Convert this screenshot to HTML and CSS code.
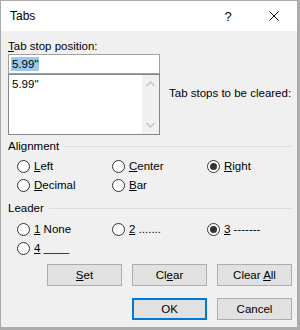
FILE: index.html
```html
<!DOCTYPE html>
<html lang="en">
<head>
  <meta charset="UTF-8">
  <title>Tabs</title>
  <link rel="stylesheet" href="styles.css">
</head>
<body>
  <div class="dialog">
    <div class="titlebar">
      <span class="title">Tabs</span>
      <span class="cap-btn">?</span>
      <span class="cap-btn">
        <svg width="10" height="10" viewBox="0 0 10 10"><path d="M0.5 0.5 L9.5 9.5 M9.5 0.5 L0.5 9.5" stroke="#000" stroke-width="1" fill="none"/></svg>
      </span>
    </div>

    <div class="content">
      <div class="label"><u>T</u>ab stop position:</div>
      <div class="stops">
        <div class="stop-col">
          <div class="input"><span class="sel">5.99"</span></div>
          <div class="listbox">
            <div class="items">
              <div>5.99"</div>
            </div>
            <div class="scroll">
              <svg width="9" height="6" viewBox="0 0 9 6"><path d="M0.5 5 L4.5 1 L8.5 5" stroke="#c4c4c4" stroke-width="1.4" fill="none"/></svg>
              <svg width="9" height="6" viewBox="0 0 9 6"><path d="M0.5 1 L4.5 5 L8.5 1" stroke="#c4c4c4" stroke-width="1.4" fill="none"/></svg>
            </div>
          </div>
        </div>
        <div class="cleared">Tab stops to be cleared:</div>
      </div>

      <div class="group-head align-head"><span>Alignment</span><span class="rule"></span></div>
      <div class="options">
        <div class="opt"><span class="radio"></span><span><u>L</u>eft</span></div>
        <div class="opt"><span class="radio"></span><span><u>C</u>enter</span></div>
        <div class="opt"><span class="radio on"></span><span><u>R</u>ight</span></div>
        <div class="opt"><span class="radio"></span><span><u>D</u>ecimal</span></div>
        <div class="opt"><span class="radio"></span><span><u>B</u>ar</span></div>
      </div>

      <div class="group-head leader-head"><span>Leader</span><span class="rule"></span></div>
      <div class="options">
        <div class="opt"><span class="radio"></span><span><u>1</u> None</span></div>
        <div class="opt"><span class="radio"></span><span><u>2</u> .......</span></div>
        <div class="opt"><span class="radio on"></span><span><u>3</u> -------</span></div>
        <div class="opt"><span class="radio"></span><span><u>4</u> ____</span></div>
      </div>

      <div class="buttons">
        <button class="btn"><u>S</u>et</button>
        <button class="btn">Cl<u>e</u>ar</button>
        <button class="btn">Clear <u>A</u>ll</button>
      </div>
      <div class="buttons second">
        <button class="btn default">OK</button>
        <button class="btn">Cancel</button>
      </div>
    </div>
  </div>
</body>
</html>
```

FILE: styles.css
```css
html, body {
  margin: 0;
  padding: 0;
}

body {
  font-family: 'Liberation Sans', Arial, sans-serif;
  font-size: 11.5px;
  line-height: 15px;
  color: #000;
  background: #fff;
}

.dialog {
  width: 300px;
  height: 330px;
  box-sizing: border-box;
  border-left: 1px solid #aaaaaa;
  border-top: 1px solid #aaaaaa;
  border-right: 3px solid #acacac;
  border-bottom: 3px solid #acacac;
  background: #f0f0f0;
  display: flex;
  flex-direction: column;
}

.titlebar {
  height: 30px;
  background: #fff;
  display: flex;
  align-items: center;
  padding-left: 9px;
}

.title {
  flex: 1;
  font-size: 12px;
}

.cap-btn {
  width: 46px;
  height: 30px;
  display: flex;
  align-items: center;
  justify-content: center;
  font-size: 13px;
}

.content {
  padding: 8px 5px 0 7px;
}

u {
  text-decoration: underline;
  text-underline-offset: 1px;
}

.stops {
  display: flex;
}

.stop-col {
  width: 152px;
}

.input {
  height: 20px;
  box-sizing: border-box;
  border: 1px solid #a0a0a0;
  background: #fff;
  padding: 1px 2px;
  display: flex;
  align-items: center;
}

.sel {
  background: #99c9ef;
  padding: 0 1px;
  line-height: 14px;
}

.listbox {
  height: 61px;
  box-sizing: border-box;
  border: 1px solid #828790;
  background: #fff;
  display: flex;
}

.items {
  flex: 1;
  padding: 2px 3px;
}

.scroll {
  width: 17px;
  background: #f0f0f0;
  display: flex;
  flex-direction: column;
  justify-content: space-between;
  align-items: center;
  padding: 6px 0 6px;
}

.cleared {
  margin: 32px 0 0 9px;
  white-space: nowrap;
}

.group-head {
  display: flex;
  align-items: center;
}

.rule {
  flex: 1;
  height: 1px;
  background: #dcdcdc;
  margin-left: 5px;
}

.align-head {
  margin-top: 4px;
}

.leader-head {
  margin-top: 8px;
}

.options {
  display: grid;
  grid-template-columns: 95px 95px 1fr;
  row-gap: 4px;
  padding-left: 9px;
  margin-top: 5px;
}

.leader-head + .options {
  margin-top: 6px;
}

.opt {
  display: flex;
  align-items: center;
  gap: 4px;
}

.radio {
  width: 13px;
  height: 13px;
  box-sizing: border-box;
  border: 1px solid #333;
  border-radius: 50%;
  background: #fff;
  display: flex;
  align-items: center;
  justify-content: center;
}

.radio.on::after {
  content: '';
  width: 7px;
  height: 7px;
  border-radius: 50%;
  background: #333;
}

.buttons {
  display: flex;
  justify-content: flex-end;
  gap: 10px;
  margin-top: 8px;
}

.buttons.second {
  margin-top: 12px;
}

.btn {
  width: 75px;
  height: 22px;
  box-sizing: border-box;
  border: 1px solid #adadad;
  background: #e1e1e1;
  font: inherit;
  color: #000;
  padding: 0;
}

.btn.default {
  border: 2px solid #0078d7;
}
```
